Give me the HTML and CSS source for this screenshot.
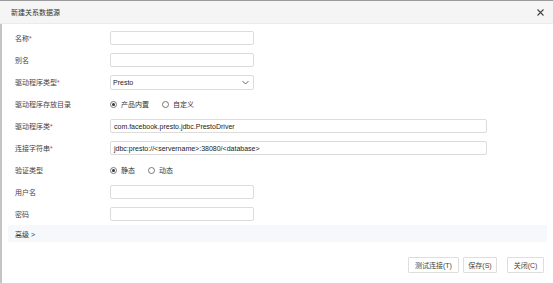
FILE: index.html
```html
<!DOCTYPE html>
<html lang="zh-CN">
<head>
  <meta charset="UTF-8" />
  <title>新建关系数据源</title>
  <link rel="stylesheet" href="styles.css">
</head>
<body>
  <div class="dialog">
    <div class="dialog-header">
      <span class="dialog-title">新建关系数据源</span>
      <svg class="close" width="7" height="7" viewBox="0 0 7 7">
        <path d="M0.5 0.5 L6.5 6.5 M6.5 0.5 L0.5 6.5" stroke="#444" stroke-width="1.1"/>
      </svg>
    </div>

    <div class="dialog-body">
      <div class="form-row">
        <label>名称<span class="req">*</span></label>
        <div class="field short"></div>
      </div>
      <div class="form-row">
        <label>别名</label>
        <div class="field short"></div>
      </div>
      <div class="form-row">
        <label>驱动程序类型<span class="req">*</span></label>
        <div class="field short select">
          <span>Presto</span>
          <svg width="7" height="5" viewBox="0 0 7 5">
            <path d="M0.5 1 L3.5 4 L6.5 1" fill="none" stroke="#555" stroke-width="0.9"/>
          </svg>
        </div>
      </div>
      <div class="form-row">
        <label>驱动程序存放目录</label>
        <div class="radios">
          <span class="radio checked"></span><span class="radio-text">产品内置</span>
          <span class="radio"></span><span class="radio-text">自定义</span>
        </div>
      </div>
      <div class="form-row">
        <label>驱动程序类<span class="req">*</span></label>
        <div class="field long">com.facebook.presto.jdbc.PrestoDriver</div>
      </div>
      <div class="form-row">
        <label>连接字符串<span class="req">*</span></label>
        <div class="field long">jdbc:presto://&lt;servername&gt;:38080/&lt;database&gt;</div>
      </div>
      <div class="form-row">
        <label>验证类型</label>
        <div class="radios">
          <span class="radio checked"></span><span class="radio-text">静态</span>
          <span class="radio"></span><span class="radio-text">动态</span>
        </div>
      </div>
      <div class="form-row">
        <label>用户名</label>
        <div class="field short"></div>
      </div>
      <div class="form-row">
        <label>密码</label>
        <div class="field short"></div>
      </div>

      <div class="advanced">高级 &gt;</div>

      <div class="footer">
        <button class="btn btn-test">测试连接(T)</button>
        <button class="btn btn-save">保存(S)</button>
        <button class="btn btn-close">关闭(C)</button>
      </div>
    </div>
  </div>
</body>
</html>
```

FILE: styles.css
```css
body {
  margin: 0;
  background-color: #fff;
  color: #333;
  font-family: "Liberation Sans", "Noto Sans CJK SC", sans-serif;
  font-size: 7px;
}
.dialog {
  width: 553px;
  height: 283px;
  overflow: hidden;
}
.dialog-header {
  height: 22px;
  border-top: 1px solid #9a9a9a;
  border-bottom: 1px solid #ebebeb;
  background-color: #f5f5f5;
  display: flex;
  align-items: center;
  justify-content: space-between;
  padding: 0 9px 0 11px;
}
.dialog-title {
  color: #333;
}
.close {
  display: block;
}
.dialog-body {
  border-left: 2px solid #c4c4c4;
  height: 259px;
  padding-top: 3px;
  box-sizing: border-box;
}
.form-row {
  display: grid;
  grid-template-columns: 95px 1fr;
  align-items: center;
  height: 22px;
  padding-left: 13px;
}
.form-row label {
  color: #444;
}
.req {
  color: #e0393e;
}
.field {
  height: 14px;
  box-sizing: border-box;
  border: 1px solid #dcdcdc;
  border-radius: 2px;
  background-color: #fff;
  padding: 0 3px;
  display: flex;
  align-items: center;
  color: #222;
}
.short {
  width: 144px;
}
.long {
  width: 377px;
}
.select {
  height: 15px;
  justify-content: space-between;
  padding: 0 4px 0 2px;
}
.radios {
  display: flex;
  align-items: center;
}
.radio {
  width: 7px;
  height: 7px;
  box-sizing: border-box;
  border: 1px solid #777;
  border-radius: 50%;
  margin-right: 4px;
  position: relative;
}
.radio.checked::after {
  content: "";
  position: absolute;
  left: 1px;
  top: 1px;
  width: 3px;
  height: 3px;
  border-radius: 50%;
  background-color: #333;
}
.radio-text {
  margin-right: 13px;
}
.advanced {
  margin: 0 6px 0 6px;
  height: 17px;
  background-color: #f7f8fb;
  display: flex;
  align-items: center;
  padding-left: 7px;
}
.footer {
  display: flex;
  justify-content: flex-end;
  margin-top: 15px;
  padding-right: 9px;
}
.btn {
  height: 16px;
  background-color: #fff;
  border: 1px solid #dedede;
  border-radius: 1px;
  font-family: inherit;
  font-size: 7px;
  color: #444;
  padding: 0;
  cursor: pointer;
}
.btn-test {
  width: 51px;
}
.btn-save {
  width: 34px;
  margin-left: 4px;
}
.btn-close {
  width: 37px;
  margin-left: 10px;
}
```
